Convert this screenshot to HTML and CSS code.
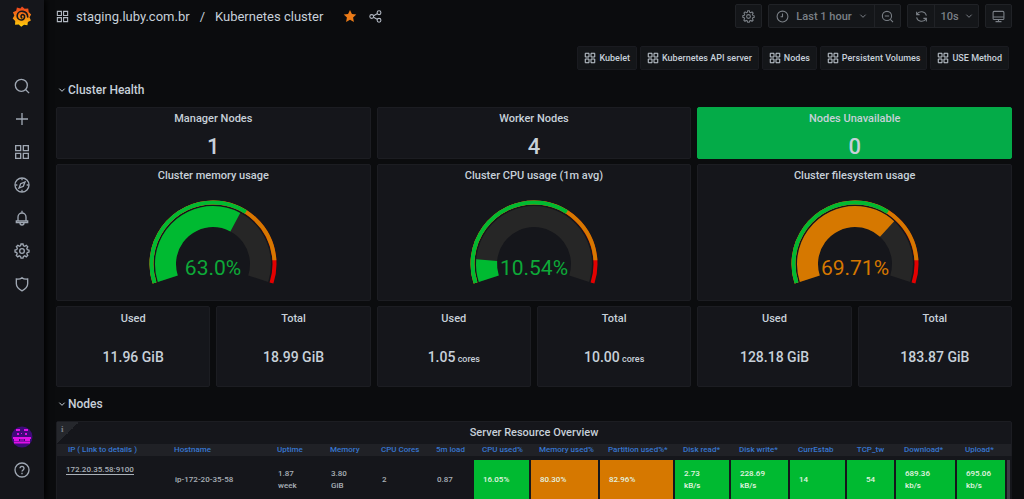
FILE: index.html
```html
<!DOCTYPE html>
<html lang="en">
<head>
<meta charset="utf-8">
<meta name="viewport" content="width=device-width, initial-scale=1">
<title>Kubernetes cluster</title>
<link rel="stylesheet" href="styles.css">
</head>
<body>
<svg class="sprite" aria-hidden="true">
  <defs>
    <linearGradient id="flame" x1="0" y1="0" x2="0" y2="1"><stop offset="0.1" stop-color="#f04a1c"/><stop offset="1" stop-color="#ffd20a"/></linearGradient>
    <symbol id="apps" viewBox="0 0 24 24"><path d="M2.5 2.5h7.5v7.5h-7.5zM14 2.5h7.5v7.5h-7.5zM2.500 14h7.500v7.500h-7.500zM14 14h7.500v7.500h-7.500z"/></symbol>
    <symbol id="search" viewBox="0 0 24 24"><circle cx="11" cy="11" r="9"/><path d="M17.200 17.200l5.500 5.500"/></symbol>
    <symbol id="plus" viewBox="0 0 24 24"><path d="M12 3v18M3 12h18"/></symbol>
    <symbol id="compass" viewBox="0 0 24 24"><circle cx="12" cy="12" r="10.500"/><path d="M12 2v3M12 19v3M2 12h3M19 12h3M16.500 7.500l-2.500 6.500-6.500 2.500 2.500-6.500z"/></symbol>
    <symbol id="bell" viewBox="0 0 24 24"><path d="M12 1v3M6 16.500V10.500a6 6 0 0 1 12 0v6M3.500 16.500h17v2.500h-17zM9 19.500a3 3 0 0 0 6 0"/></symbol>
    <symbol id="gear" viewBox="0 0 24 24"><circle cx="12" cy="12" r="3.500"/><path d="M9.800 4.200L10.500 1.500h3l.7 2.700 1.900.8 2.400-1.400 2.100 2.100-1.400 2.400.8 1.900 2.500.7v2.900l-2.500.7-.8 1.900 1.400 2.400-2.100 2.100-2.400-1.400-1.900.8-.7 2.500h-3l-.7-2.500-1.900-.8-2.400 1.400-2.100-2.100 1.400-2.400-.8-1.900L1.500 13.500v-3l2.700-.7.8-1.900-1.400-2.400 2.100-2.100 2.400 1.400z"/></symbol>
    <symbol id="shield" viewBox="0 0 24 24"><path d="M3.500 4.500c3 .5 6.200 0 8.500-2 2.300 2 5.500 2.500 8.500 2v7c0 4.500-3.500 8-8.500 10.700-5-2.700-8.500-6.200-8.500-10.700z"/></symbol>
    <symbol id="help" viewBox="0 0 24 24"><circle cx="12" cy="12" r="10.500"/><path d="M9 9.500a3 3 0 1 1 4.500 2.600c-1 .6-1.500 1-1.500 2M12 16v2.200"/></symbol>
    <symbol id="clock" viewBox="0 0 24 24"><circle cx="12" cy="12" r="10"/><path d="M12 6.500v6H8.500"/></symbol>
    <symbol id="zoomout" viewBox="0 0 24 24"><circle cx="11" cy="11" r="8.500"/><path d="M17.200 17.200l5 5M7 11h8"/></symbol>
    <symbol id="sync" viewBox="0 0 24 24"><path d="M3 3v5.500h5.500M3.500 8A9.500 9.500 0 0 1 21 10.500M21 21v-5.500h-5.500M20.500 16A9.500 9.500 0 0 1 3 13.500"/></symbol>
    <symbol id="monitor" viewBox="0 0 24 24"><rect x="2" y="2.500" width="20" height="15" rx="2"/><path d="M2 13h20M12 17.500v4M6.500 21.500h11"/></symbol>
    <symbol id="down" viewBox="0 0 24 24"><path d="M4 8l8 8 8-8"/></symbol>
    <symbol id="share" viewBox="0 0 24 24"><circle cx="5" cy="12" r="3.500"/><circle cx="18.500" cy="5" r="3.500"/><circle cx="18.500" cy="19" r="3.500"/><path d="M8.500 10.500l6.500-3.500M8.500 13.500l6.500 3.500"/></symbol>
  </defs>
</svg>
<div class="app">
  <nav class="sidebar" aria-label="Main">
    <a class="logo" href="#" aria-label="Home"><svg viewBox="0 0 24 26">
      <path fill="url(#flame)" d="M12 .5l3.300 2.800 4.400-.3.600 4.300 3 3.300-2 3.300 1.700 4-3.700 1.800-.6 4.200-4.200-.8-3.500 2.700-3-3-4.600.4.200-4.500L.5 15.500l2-3.700L.8 7.600l4-1.700.9-4L10 3z"/>
      <path fill="none" stroke="#15161b" stroke-width="2" stroke-linecap="round" d="M11.800 14.700a2.200 2.200 0 1 1 3.300-2.500c.6 3.200-1.600 5.400-4.400 5.100-3.300-.3-5.100-3-4.600-5.900.6-3.300 3.600-5.400 7-4.800 3.600.6 5.900 3.400 6 7"/>
    </svg></a>
    <div class="menu">
      <a href="#" aria-label="Search"><svg class="icon"><use href="#search"/></svg></a>
      <a href="#" aria-label="Create"><svg class="icon"><use href="#plus"/></svg></a>
      <a href="#" aria-label="Dashboards"><svg class="icon"><use href="#apps"/></svg></a>
      <a href="#" aria-label="Explore"><svg class="icon"><use href="#compass"/></svg></a>
      <a href="#" aria-label="Alerting"><svg class="icon"><use href="#bell"/></svg></a>
      <a href="#" aria-label="Configuration"><svg class="icon"><use href="#gear"/></svg></a>
      <a href="#" aria-label="Server admin"><svg class="icon"><use href="#shield"/></svg></a>
    </div>
    <div class="menu menu-bottom">
      <a href="#" aria-label="Profile"><svg class="avatar" viewBox="0 0 22 22"><circle cx="11" cy="11" r="10.500" fill="#3f0a7a"/><path fill="#e010e8" d="M5 3h4v2H5zM13 3h4v2h-4zM6 7h2v2H6zM10 7h1v1h-1zM14 7h2v2h-2zM2 11h18v2H2zM3 13h5v2H3zM14 13h5v2h-5zM9 13.500h4v1H9zM3 15.500h16v2H3z"/></svg></a>
      <a href="#" aria-label="Help"><svg class="icon"><use href="#help"/></svg></a>
    </div>
  </nav>
  <main class="main">
    <header class="topbar">
      <svg class="icon small"><use href="#apps"/></svg>
      <h1 class="crumbs"><a href="#">staging.luby.com.br</a><span>/</span><a href="#">Kubernetes cluster</a></h1>
      <button class="plain star" aria-label="Unmark as favorite"><svg viewBox="0 0 24 24"><path fill="#eb7b18" d="M12 1.500l3.300 6.900 7.500 1-5.500 5.200 1.400 7.500-6.700-3.700-6.700 3.700 1.400-7.500-5.500-5.200 7.500-1z"/></svg></button>
      <button class="plain" aria-label="Share dashboard"><svg class="icon small"><use href="#share"/></svg></button>
      <div class="tools">
        <div class="group"><button class="solo" aria-label="Dashboard settings"><svg class="icon small"><use href="#gear"/></svg></button></div>
        <div class="group"><button class="range"><svg class="icon small"><use href="#clock"/></svg>Last 1 hour<svg class="icon caret"><use href="#down"/></svg></button><button aria-label="Zoom out"><svg class="icon small"><use href="#zoomout"/></svg></button></div>
        <div class="group"><button aria-label="Refresh"><svg class="icon small"><use href="#sync"/></svg></button><button class="interval">10s<svg class="icon caret"><use href="#down"/></svg></button></div>
        <div class="group"><button class="solo" aria-label="Cycle view mode"><svg class="icon small"><use href="#monitor"/></svg></button></div>
      </div>
    </header>
    <div class="links">
      <a href="#"><svg class="icon link-icon"><use href="#apps"/></svg>Kubelet</a>
      <a href="#"><svg class="icon link-icon"><use href="#apps"/></svg>Kubernetes API server</a>
      <a href="#"><svg class="icon link-icon"><use href="#apps"/></svg>Nodes</a>
      <a href="#"><svg class="icon link-icon"><use href="#apps"/></svg>Persistent Volumes</a>
      <a href="#"><svg class="icon link-icon"><use href="#apps"/></svg>USE Method</a>
    </div>
    <button class="row-title"><svg class="icon chevron"><use href="#down"/></svg>Cluster Health</button>
    <div class="grid">
      <section class="panel wide count"><h2>Manager Nodes</h2><p>1</p></section>
      <section class="panel wide count"><h2>Worker Nodes</h2><p>4</p></section>
      <section class="panel wide count ok"><h2>Nodes Unavailable</h2><p>0</p></section>

      <section class="panel wide gauge"><h2>Cluster memory usage</h2>
        <svg viewBox="0 0 128 84"><path class="band track" d="M18.800 78.700A47.500 47.500 0 1 1 109.200 78.700"/><path class="band green" pathLength="100" stroke-dasharray="63 200" d="M18.800 78.700A47.500 47.500 0 1 1 109.200 78.700"/><path class="rim red" d="M5.500 83A61.500 61.500 0 1 1 122.500 83"/><path class="rim orange" pathLength="100" stroke-dasharray="90 200" d="M5.500 83A61.500 61.500 0 1 1 122.500 83"/><path class="rim green" pathLength="100" stroke-dasharray="65 200" d="M5.500 83A61.500 61.500 0 1 1 122.500 83"/><text class="good" x="64" y="75">63.0%</text></svg></section>
      <section class="panel wide gauge"><h2>Cluster CPU usage (1m avg)</h2>
        <svg viewBox="0 0 128 84"><path class="band track" d="M18.800 78.700A47.500 47.500 0 1 1 109.200 78.700"/><path class="band green" pathLength="100" stroke-dasharray="10.540 200" d="M18.800 78.700A47.500 47.500 0 1 1 109.200 78.700"/><path class="rim red" d="M5.500 83A61.500 61.500 0 1 1 122.500 83"/><path class="rim orange" pathLength="100" stroke-dasharray="90 200" d="M5.500 83A61.500 61.500 0 1 1 122.500 83"/><path class="rim green" pathLength="100" stroke-dasharray="65 200" d="M5.500 83A61.500 61.500 0 1 1 122.500 83"/><text class="good" x="64" y="75">10.54%</text></svg></section>
      <section class="panel wide gauge"><h2>Cluster filesystem usage</h2>
        <svg viewBox="0 0 128 84"><path class="band track" d="M18.800 78.700A47.500 47.500 0 1 1 109.200 78.700"/><path class="band orange" pathLength="100" stroke-dasharray="69.710 200" d="M18.800 78.700A47.500 47.500 0 1 1 109.200 78.700"/><path class="rim red" d="M5.500 83A61.500 61.500 0 1 1 122.500 83"/><path class="rim orange" pathLength="100" stroke-dasharray="90 200" d="M5.500 83A61.500 61.500 0 1 1 122.500 83"/><path class="rim green" pathLength="100" stroke-dasharray="65 200" d="M5.500 83A61.500 61.500 0 1 1 122.500 83"/><text class="warn" x="64" y="75">69.71%</text></svg></section>

      <section class="panel stat"><h2>Used</h2><p>11.96 GiB</p></section>
      <section class="panel stat"><h2>Total</h2><p>18.99 GiB</p></section>
      <section class="panel stat"><h2>Used</h2><p>1.05<small> cores</small></p></section>
      <section class="panel stat"><h2>Total</h2><p>10.00<small> cores</small></p></section>
      <section class="panel stat"><h2>Used</h2><p>128.18 GiB</p></section>
      <section class="panel stat"><h2>Total</h2><p>183.87 GiB</p></section>
    </div>
    <button class="row-title"><svg class="icon chevron"><use href="#down"/></svg>Nodes</button>
    <section class="panel overview">
      <span class="info" aria-hidden="true">i</span>
      <h2>Server Resource Overview</h2>
      <div class="table-wrap">
        <table>
          <colgroup><col class="w-ip"><col class="w-host"><col class="w-up"><col class="w-mem"><col class="w-cores"><col class="w-load"><col class="w-cpu"><col class="w-memused"><col class="w-part"><col class="w-read"><col class="w-write"><col class="w-estab"><col class="w-tcp"><col class="w-down"><col class="w-upl"><col class="w-bar"></colgroup>
          <thead><tr><th class="first">IP ( Link to details )</th><th>Hostname</th><th>Uptime</th><th>Memory</th><th>CPU Cores</th><th>5m load</th><th>CPU used%</th><th>Memory used%</th><th>Partition used%*</th><th>Disk read*</th><th>Disk write*</th><th>CurrEstab</th><th class="center">TCP_tw</th><th>Download*</th><th>Upload*</th><th></th></tr></thead>
          <tbody><tr><td class="ip"><a href="#">172.20.35.58:9100</a></td><td>ip-172-20-35-58</td><td>1.87<br>week</td><td>3.80<br>GiB</td><td>2</td><td>0.87</td><td class="low">16.05%</td><td class="high">80.30%</td><td class="high">82.96%</td><td class="low">2.73<br>kB/s</td><td class="low">228.69<br>kB/s</td><td class="low">14</td><td class="low center">54</td><td class="low">689.36<br>kb/s</td><td class="low">695.06<br>kb/s</td><td class="thumb"></td></tr></tbody>
        </table>
      </div>
    </section>
  </main>
</div>
</body>
</html>
```
FILE: styles.css
```css
* { box-sizing: border-box; }
body { margin: 0; background: #0b0c0e; color: #c7d0d9; font-family: Roboto, "Liberation Sans", sans-serif; font-size: 11px; }
a { color: inherit; text-decoration: none; }
button { margin: 0; padding: 0; border: 0; background: none; color: inherit; font: inherit; cursor: pointer; }
h1, h2, p { margin: 0; font-weight: 500; }
.sprite { position: absolute; width: 0; height: 0; }
.icon { width: 16px; height: 16px; flex: none; fill: none; stroke: currentColor; stroke-width: 2; }
.small { width: 13px; height: 13px; }
.caret { width: 8px; height: 8px; stroke-width: 3; }
.app { display: flex; height: 100vh; overflow: hidden; }

.sidebar { display: flex; flex-direction: column; align-items: center; flex: none; width: 44px; padding: 6px 0 12px; background: #15161b; box-shadow: 2px 0 6px #000; color: #9fa7b3; }
.logo svg { display: block; width: 20px; height: 21px; }
.menu { display: flex; flex-direction: column; gap: 17px; margin-top: 51px; }
.menu a { display: flex; justify-content: center; align-items: center; height: 16px; }
.menu-bottom { margin-top: auto; padding-bottom: 9px; }
.avatar { width: 22px; height: 22px; flex: none; }

.main { flex: 1; min-width: 0; padding: 4px 12px 0; }
.topbar { display: flex; align-items: center; height: 24px; color: #b4bac4; }
.crumbs { display: flex; gap: 10px; margin: 0 20px 0 7px; font-size: 13px; font-weight: 400; color: #c7d0d9; }
.plain { display: flex; margin-right: 12px; }
.star svg { width: 14px; height: 14px; }
.tools { display: flex; gap: 6px; margin-left: auto; color: #7b8087; font-weight: 500; }
.group { display: flex; border: 1px solid #202226; border-radius: 2px; background: #141619; }
.group button { display: flex; align-items: center; justify-content: center; height: 22px; width: 26px; }
.group button + button { border-left: 1px solid #202226; }
.group .solo { width: 25px; }
.group .range { width: 105px; gap: 7px; }
.group .interval { width: 44px; gap: 6px; }

.links { display: flex; justify-content: flex-end; gap: 3px; padding: 18px 3px 3px 0; }
.links a { display: flex; align-items: center; gap: 3px; height: 24px; padding: 0 6px; border: 1px solid #1a1b20; border-radius: 2px; background: #141619; font-size: 9px; font-weight: 500; }
.link-icon { width: 12px; height: 12px; }
.row-title { display: flex; align-items: center; gap: 2px; height: 16px; margin: 9px 0 9px 2px; font-size: 12px; font-weight: 500; }
.chevron { width: 8px; height: 8px; stroke-width: 3; }

.grid { display: grid; grid-template-columns: repeat(6, 1fr); gap: 5px 6px; }
.panel { display: flex; flex-direction: column; align-items: center; min-width: 0; border: 1px solid #1c1d22; border-radius: 2px; background: #15161b; text-align: center; }
.panel h2 { height: 22px; font-size: 11px; line-height: 22px; }
.wide { grid-column: span 2; }
.count { height: 52px; }
.count p { font-size: 22px; line-height: 34px; }
.ok { border-color: #04ab48; background: #04ab48; }
.gauge { height: 137px; }
.gauge svg { width: 128px; height: 84px; margin-top: 13px; }
.gauge path { fill: none; }
.gauge text { font-size: 21px; text-anchor: middle; }
.band { stroke-width: 21; }
.rim { stroke-width: 4; }
.track { stroke: #262626; }
.green { stroke: #00ba31; }
.orange { stroke: #d67800; }
.red { stroke: #e30000; }
.good { fill: #0da938; }
.warn { fill: #d67800; }
.stat { height: 81px; padding-top: 1px; }
.stat p { font-size: 14px; line-height: 54px; }
.stat small { font-size: 9px; }

.overview { position: relative; align-items: stretch; }
.info { position: absolute; top: 0; left: 0; width: 22px; height: 22px; padding: 2px 0 0 4px; background: linear-gradient(135deg, #25272c 50%, transparent 50%); font-family: "Liberation Serif", serif; font-size: 9px; font-weight: 700; line-height: 10px; text-align: left; color: #7b8087; }
table { width: 100%; table-layout: fixed; border-collapse: collapse; text-align: left; font-size: 8px; line-height: 12px; }
th { height: 14px; padding: 0 0 0 9px; background: #202126; color: #3776d0; font-weight: 500; white-space: nowrap; }
td { height: 42px; padding: 0 0 0 9px; border: solid #15161b; border-width: 4px 2px 0 0; font-weight: 500; color: #a9b0b8; }
th.first { padding-left: 11px; }
th.center, td.center { padding: 0; text-align: center; }
td.low, td.high { color: #e4f4e2; }
.low { background: #00ba31; }
.high { background: #d67800; }
td.ip { padding: 0 0 20px 9px; }
.ip a { border-bottom: 1px solid #a9b0b8; }
.thumb { padding: 0; background: #3c3d43; }
.w-ip { width: 108px; }
.w-host { width: 103px; }
.w-up { width: 53px; }
.w-mem { width: 51px; }
.w-cores { width: 55px; }
.w-load { width: 46px; }
.w-cpu { width: 57px; }
.w-memused { width: 69px; }
.w-part { width: 75px; }
.w-read { width: 56px; }
.w-write { width: 59px; }
.w-estab { width: 57px; }
.w-tcp { width: 49px; }
.w-down { width: 61px; }
.w-upl { width: 50px; }
.w-bar { width: 5px; }
```
